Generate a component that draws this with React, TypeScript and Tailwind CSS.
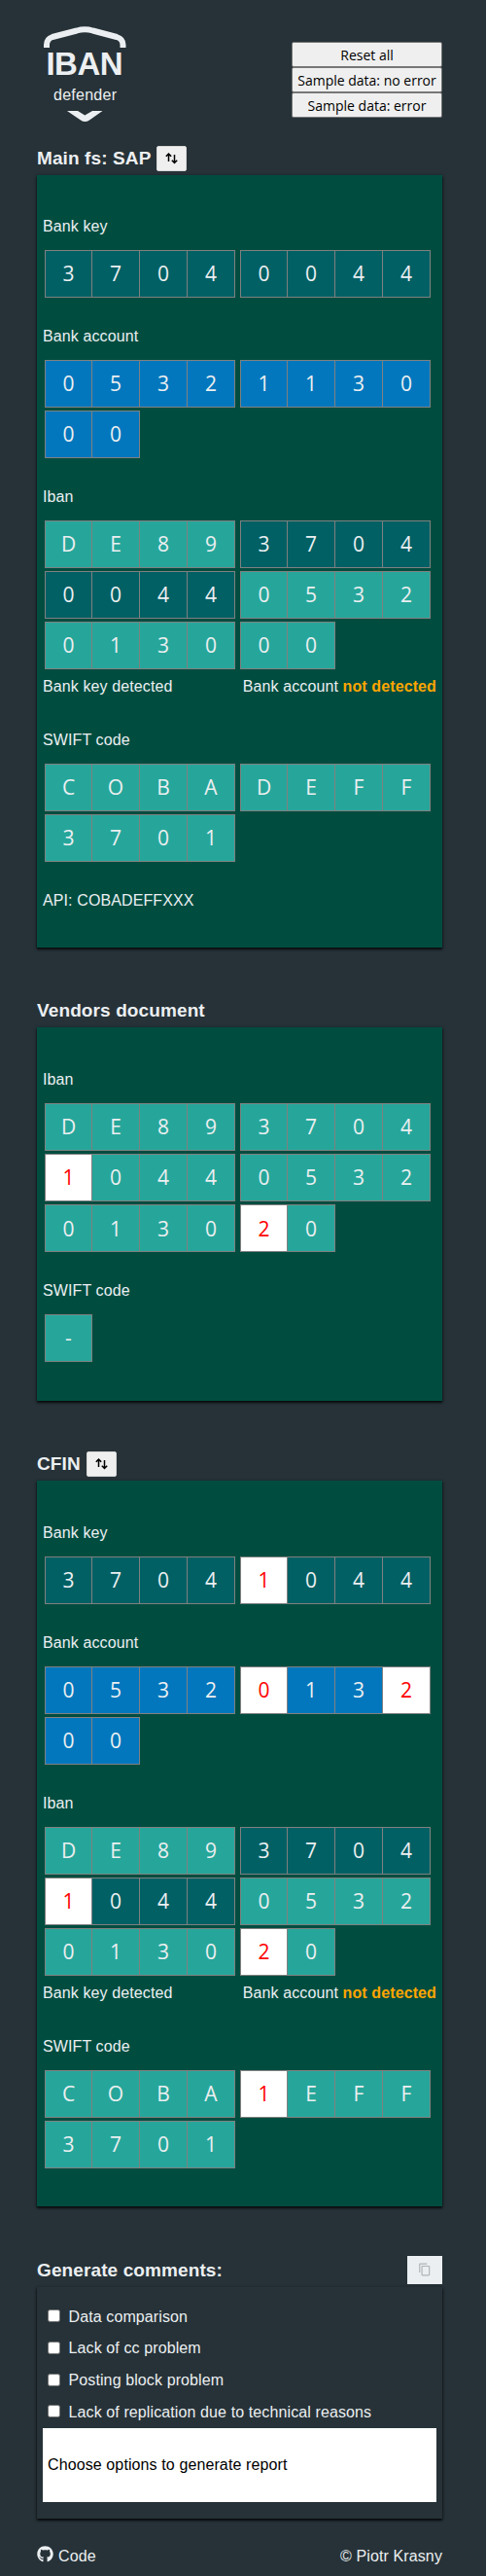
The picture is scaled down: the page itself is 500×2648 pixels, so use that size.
import React from "react";
import { MdContentCopy } from "react-icons/md";
import { FaGithub } from "react-icons/fa";

const TONES = {
  t: "bg-[#26a69a] text-[#eceff1]",
  k: "bg-[#006064] text-[#eceff1]",
  b: "bg-[#0277bd] text-[#eceff1]",
  x: "bg-white text-[#ff0000]",
};
type Tone = keyof typeof TONES;

function Code({ value, tones }: { value: string; tones: string }) {
  const groups: number[][] = [];
  for (let i = 0; i < value.length; i += 4) {
    groups.push([0, 1, 2, 3].map((n) => n + i).filter((n) => n < value.length));
  }
  return (
    <div className="grid grid-cols-[196px_196px] gap-x-[5px] gap-y-[3.3px] pl-[2px]">
      {groups.map((g) => (
        <div key={g[0]} className="grid w-[196px] grid-cols-4">
          {g.map((n) => (
            <div
              key={n}
              className={`flex h-[48.8px] items-center justify-center border border-[#808080] pt-[1px] font-['Open_Sans',sans-serif] text-[21px] leading-none tracking-normal not-first:border-l-0 ${TONES[tones[n] as Tone]}`}
            >
              {value[n]}
            </div>
          ))}
        </div>
      ))}
    </div>
  );
}

function Field({ label, value, tones, children }: { label: string; value: string; tones: string; children?: React.ReactNode }) {
  return (
    <div className="pb-[30.1px]">
      <div className="pb-[14px] leading-[20px]">{label}</div>
      <Code value={value} tones={tones} />
      {children}
    </div>
  );
}

function Detected() {
  return (
    <div className="flex justify-between pb-[4.8px] pt-[8px] leading-[20px]">
      <span>Bank key detected</span>
      <span>
        Bank account <b className="text-[#ffa500]">not detected</b>
      </span>
    </div>
  );
}

const SHADOW = "shadow-[0_2px_2px_0_rgba(0,0,0,0.6),0_1px_3px_0_rgba(0,0,0,0.6)]";

function Swap() {
  return (
    <button className="flex h-[25.5px] w-[31px] items-center justify-center rounded-[2px] border border-[#d8d8d8] bg-[#efefef] text-black">
      <svg width="13" height="12" viewBox="0 0 13 12" fill="none" stroke="currentColor" strokeWidth="1.5">
        <path d="M3.5 9V1.2M0.8 3.8L3.5 1.1L6.2 3.8M9.5 2V10.4M6.8 7.8L9.5 10.5L12.2 7.8" />
      </svg>
    </button>
  );
}

function Panel({ title, swap, size, children }: { title: string; swap?: boolean; size: string; children: React.ReactNode }) {
  return (
    <section>
      <div className="flex h-[30px] items-start gap-[6px]">
        <h2 className="text-[19px] font-bold leading-[26px]">{title}</h2>
        {swap && <Swap />}
      </div>
      <div className={`${size} ${SHADOW} bg-[#004d40] px-[6px]`}>{children}</div>
    </section>
  );
}

const OPTIONS = [
  "Data comparison",
  "Lack of cc problem",
  "Posting block problem",
  "Lack of replication due to technical reasons",
];

export default function App() {
  return (
    <main className="h-[2648px] w-[500px] bg-[#263238] pl-[38px] pr-[45px] font-['Liberation_Sans',Arial,sans-serif] text-[16px] tracking-[0.11px] text-[#eceff1]">
      <header className="flex h-[150px] justify-between pt-[26px]">
        <svg width="100" height="104" viewBox="0 0 100 104" fill="none" className="tracking-normal">
          <path d="M10 23V20Q10 14 16 12L41 5.5Q49.300 3 57.500 5.500L82 12Q88.500 14 88.500 20V23" stroke="#eceff1" strokeWidth="6" />
          <text x="49" y="51" textAnchor="middle" fill="#eceff1" fontSize="33" fontWeight="bold" textLength="79">IBAN</text>
          <text x="49.5" y="77" textAnchor="middle" fill="#eceff1" fontSize="16" textLength="65">defender</text>
          <path d="M31 88H42L49.300 92.500L57 88H67.500L54 97.500Q49.300 100.500 45 97.500Z" fill="#eceff1" />
        </svg>
        <div className="flex flex-col pt-[17px]">
          {["Reset all", "Sample data: no error", "Sample data: error"].map((t) => (
            <button key={t} className="h-[26px] w-[155px] rounded-[2px] border border-[#767676] bg-[#efefef] pt-px font-['Open_Sans',sans-serif] text-[14px] leading-[23px] tracking-normal text-black">
              {t}
            </button>
          ))}
        </div>
      </header>

      <Panel title="Main fs: SAP" swap size="h-[794px] pt-[43px]">
        <Field label="Bank key" value="37040044" tones="kkkkkkkk" />
        <Field label="Bank account" value="0532113000" tones="bbbbbbbbbb" />
        <Field label="Iban" value="DE89370400440532013000" tones="ttttkkkkkkkktttttttttt">
          <Detected />
        </Field>
        <Field label="SWIFT code" value="COBADEFF3701" tones="tttttttttttt" />
        <div className="leading-[20px]">API: COBADEFFXXX</div>
      </Panel>

      <div className="h-[52px]" />
      <Panel title="Vendors document" size="h-[384px] pt-[44px]">
        <Field label="Iban" value="DE89370410440532013020" tones="ttttttttxtttttttttttxt" />
        <Field label="SWIFT code" value="-" tones="t" />
      </Panel>

      <div className="h-[52px]" />
      <Panel title="CFIN" swap size="h-[746px] pt-[44px]">
        <Field label="Bank key" value="37041044" tones="kkkkxkkk" />
        <Field label="Bank account" value="0532013200" tones="bbbbxbbxbb" />
        <Field label="Iban" value="DE89370410440532013020" tones="ttttkkkkxkkkttttttttxt">
          <Detected />
        </Field>
        <Field label="SWIFT code" value="COBA1EFF3701" tones="ttttxttttttt" />
      </Panel>

      <section className="pt-[51px]">
        <div className="flex h-[32px] items-start justify-between">
          <h2 className="text-[19px] font-bold leading-[29px]">Generate comments:</h2>
          <button className="flex h-[29px] w-[36px] items-center justify-center bg-[#eceff1] pb-[2px] text-[#b0b3b5]">
            <MdContentCopy size={14} />
          </button>
        </div>
        <div className={`${SHADOW} h-[238px] bg-[#263238] px-[6px] pt-[14.6px]`}>
          {OPTIONS.map((o) => (
            <label key={o} className="flex h-[32.6px] items-center pl-[4.5px]">
              <span className="mb-[2px] mr-[9px] h-[13px] w-[13px] rounded-[2.5px] border border-[#767676] bg-white" />
              {o}
            </label>
          ))}
          <div className="flex h-[76px] items-center bg-white px-[5px] text-black">Choose options to generate report</div>
        </div>
      </section>
      <footer className="flex items-center justify-between pt-[28px] leading-[20px]">
        <span className="flex items-center gap-[5px]">
          <FaGithub size={17} className="mb-[4px]" />
          Code
        </span>
        <span>© Piotr Krasny</span>
      </footer>
    </main>
  );
}
